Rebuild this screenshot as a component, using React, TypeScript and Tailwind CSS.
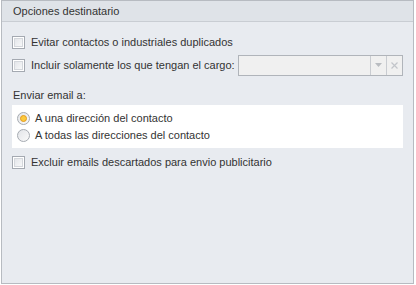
function CheckBox() {
  return (
    <span className="flex h-[13px] w-[13px] shrink-0 items-center justify-center border border-[#a4a9b1] bg-white">
      <span className="h-[9px] w-[9px] border border-[#d4d7dc] bg-gradient-to-br from-[#e4e6ea] to-[#f7f8f9]" />
    </span>
  );
}

function Radio({ checked }: { checked?: boolean }) {
  return (
    <span className="flex h-[13px] w-[13px] shrink-0 items-center justify-center rounded-full border border-[#a6abb2] bg-gradient-to-br from-[#e2e4e8] to-[#fafafa]">
      {checked && (
        <span className="h-[7px] w-[7px] rounded-full border border-[#e39a1c] bg-[#fbc93d]" />
      )}
    </span>
  );
}

export default function App() {
  return (
    <div
      className="h-[285px] w-[416px] whitespace-nowrap bg-white pl-[1px] text-[11px] text-[#333333]"
      style={{ fontFamily: '"Liberation Sans", Arial, sans-serif' }}
    >
      <div className="flex h-[284px] w-[413px] flex-col border border-[#b7bbc1] bg-[#e8ebf0]">
        <div className="flex h-[21px] shrink-0 items-center border-b border-[#c9cdd3] bg-[#dfe3e8] pl-[11px]">
          Opciones destinatario
        </div>

        <div className="flex flex-col px-[10px] pt-[12px]">
          <label className="flex h-[16px] items-center gap-[6px]">
            <CheckBox />
            <span>Evitar contactos o industriales duplicados</span>
          </label>

          <div className="mt-[3px] flex h-[24px] items-center">
            <label className="flex shrink-0 items-center gap-[6px]">
              <CheckBox />
              <span>Incluir solamente los que tengan el cargo:</span>
            </label>
            <div className="ml-auto flex h-[21px] w-[165px] shrink-0 border border-[#b0b4ba] bg-[#f0f0f0]">
              <div className="flex-1" />
              <div className="flex w-[16px] items-center justify-center border-l border-[#c9ccd1]">
                <svg width="7" height="4" viewBox="0 0 7 4">
                  <path d="M0 0h7L3.5 4z" fill="#b9bcc1" />
                </svg>
              </div>
              <div className="flex w-[16px] items-center justify-center border-l border-[#c9ccd1]">
                <svg width="7" height="7" viewBox="0 0 7 7">
                  <path d="M0.5 0.5l6 6M6.5 0.5l-6 6" stroke="#c2c5ca" strokeWidth="1.2" />
                </svg>
              </div>
            </div>
          </div>

          <div className="mt-[10px] h-[16px] pl-[1px] leading-[16px]">Enviar email a:</div>

          <div className="mt-[2px] flex h-[43px] flex-col justify-center gap-[1px] bg-white pl-[5px]">
            <label className="flex h-[16px] items-center gap-[5px]">
              <Radio checked />
              <span>A una dirección del contacto</span>
            </label>
            <label className="flex h-[16px] items-center gap-[5px]">
              <Radio />
              <span>A todas las direcciones del contacto</span>
            </label>
          </div>

          <label className="mt-[6px] flex h-[16px] items-center gap-[6px]">
            <CheckBox />
            <span>Excluir emails descartados para envio publicitario</span>
          </label>
        </div>
      </div>
    </div>
  );
}
